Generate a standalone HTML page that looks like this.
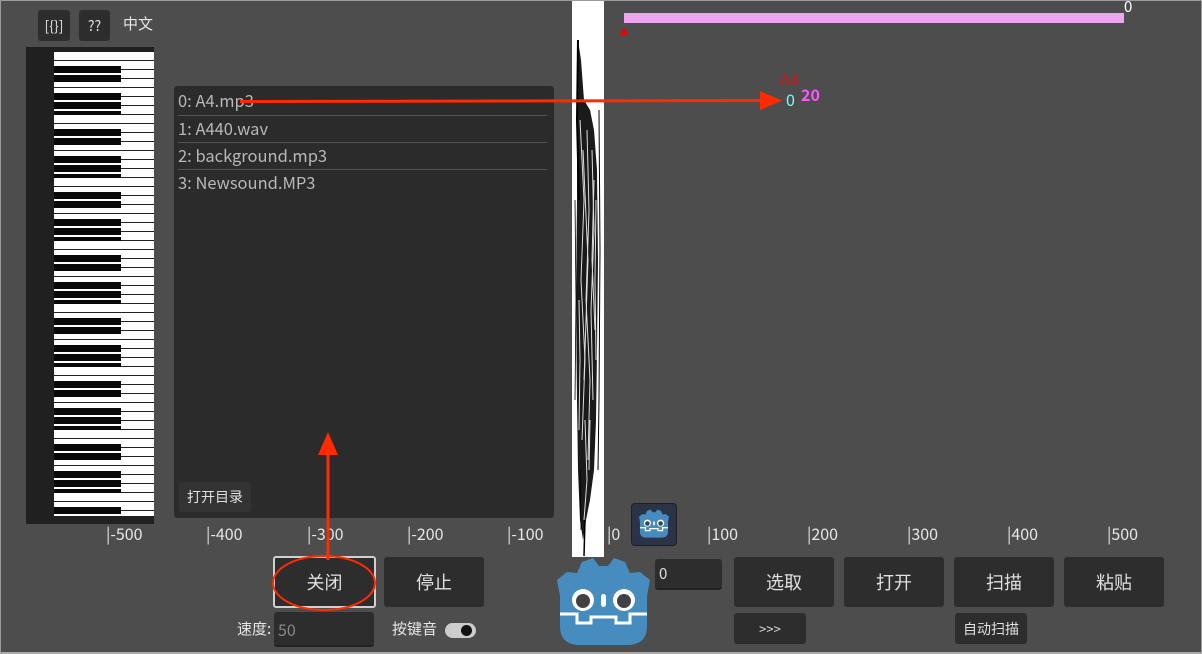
<!DOCTYPE html>
<html><head><meta charset="utf-8"><style>
*{margin:0;padding:0;box-sizing:border-box}
body{width:1202px;height:654px;background:#4d4d4d;position:relative;overflow:hidden;font-family:"Noto Sans CJK SC","Liberation Sans",sans-serif;color:#e6e6e6}
.frame{position:absolute;left:0;top:0;width:1202px;height:654px;border:1px solid #9a9a9a;border-bottom:2px solid #aaa;pointer-events:none}
.a{position:absolute;line-height:1.2}
.btn{position:absolute;background:#2d2d2d;border-radius:3px;display:flex;align-items:center;justify-content:center;color:#e0e0e0}
.tick{position:absolute;top:524px;font-size:16px;color:#e6e6e6;line-height:1.2}
.item{position:absolute;left:178px;font-size:16.5px;color:#b8b8b8;line-height:1.2}
.sep{position:absolute;left:178px;width:369px;height:1px;background:#555}
</style></head><body>
<div class="btn" style="left:38px;top:10px;width:32px;height:31px;font-size:14px">[{}]</div>
<div class="btn" style="left:79px;top:10px;width:31px;height:31px;font-size:14px">??</div>
<div class="a" style="left:123px;top:15px;font-size:15px">中文</div>

<div class="a" style="left:26px;top:47px;width:128px;height:477px;background:#202020"></div>
<div class="a" style="left:54px;top:52px;width:100px;height:464px;background-color:#fff;background-image:linear-gradient(to bottom,transparent 8px,#222 8px,#222 9px);background-size:100% 9px"></div>
<div class="a" style="left:54px;top:52px;width:67px;height:464px;background-image:linear-gradient(to bottom,transparent 14px,#080808 14px,#080808 21px,transparent 21px,transparent 23px,#080808 23px,#080808 30px,transparent 30px,transparent 41px,#080808 41px,#080808 48px,transparent 48px,transparent 50px,#080808 50px,#080808 57px,transparent 57px,transparent 59px,#080808 59px,#080808 66px,transparent 66px);background-size:100% 63px;background-repeat:repeat-y"></div>

<div class="a" style="left:174px;top:86px;width:380px;height:432px;background:#2b2b2b;border-radius:3px"></div>
<div class="item" style="top:91px">0: A4.mp3</div>
<div class="sep" style="top:115px"></div>
<div class="item" style="top:119px">1: A440.wav</div>
<div class="sep" style="top:142px"></div>
<div class="item" style="top:146px">2: background.mp3</div>
<div class="sep" style="top:169px"></div>
<div class="item" style="top:173px">3: Newsound.MP3</div>
<div class="btn" style="left:179px;top:482px;width:72px;height:30px;background:#333;font-size:14px">打开目录</div>

<svg class="a" style="left:572px;top:0" width="32" height="557" viewBox="0 0 32 557">
<rect width="32" height="557" fill="#fff"/>
<path d="M6,40 L9,60 L12,100 L18,110 L22,130 L25,170 L26,260 L25,350 L24,420 L22,470 L18,500 L14,520 L11,540 L8,520 L6,470 L5,400 L4,300 L5,200 L5,120 Z" fill="#1a1a1a"/>
<g stroke="#fff" fill="none" stroke-width="1" opacity="0.85">
<path d="M8,120 L12,200 L9,280 L13,360 L10,440"/>
<path d="M15,130 L17,210 L14,300 L18,380 L16,460"/>
<path d="M20,150 L22,230 L19,310 L21,400"/>
<path d="M7,300 L8,360 L7,430"/>
<path d="M24,200 L23,280 L24,360"/>
<path d="M13,420 L15,480 L12,520"/>
<path d="M18,420 L17,470"/>
<path d="M11,150 L16,260 L12,380"/>
<path d="M22,180 L20,260 L23,330"/>
</g>
<g stroke="#000" fill="none">
<path d="M6,40 L5,120 L7,200" stroke-width="2"/>
<path d="M27,110 L28,250 L27,400 L26,470" stroke-width="1"/>
<path d="M3,200 L4,300 L3,400" stroke-width="0.8"/>
<path d="M13,520 L12,556" stroke-width="1.5"/>
<path d="M8,470 L9,530" stroke-width="0.8"/>
</g></svg>

<div class="a" style="left:624px;top:13px;width:500px;height:10px;background:#eea6ee"></div>
<div class="a" style="left:1124px;top:-2px;font-size:15px;color:#fff">0</div>
<svg class="a" style="left:620px;top:27px" width="8" height="8"><path d="M4,0 L8,8 L0,8Z" fill="#e00"/></svg>
<div class="a" style="left:780px;top:70px;font-size:16px;color:#e01010">A4</div>
<div class="a" style="left:786px;top:90px;font-size:16px;color:#7ff">0</div>
<div class="a" style="left:801px;top:85px;font-size:16px;color:#f5f;font-weight:bold">20</div>

<div class="tick" style="left:106px">|-500</div>
<div class="tick" style="left:206px">|-400</div>
<div class="tick" style="left:307px">|-300</div>
<div class="tick" style="left:407px">|-200</div>
<div class="tick" style="left:507px">|-100</div>
<div class="tick" style="left:607px">|0</div>
<div class="tick" style="left:707px">|100</div>
<div class="tick" style="left:807px">|200</div>
<div class="tick" style="left:907px">|300</div>
<div class="tick" style="left:1007px">|400</div>
<div class="tick" style="left:1107px">|500</div>

<div class="btn" style="left:273px;top:556px;width:103px;height:52px;border:2px solid #d0d0d0;font-size:18px">关闭</div>
<div class="btn" style="left:384px;top:557px;width:100px;height:50px;font-size:18px">停止</div>
<div class="a" style="left:237px;top:620px;font-size:15px">速度:</div>
<div class="btn" style="left:274px;top:612px;width:100px;height:35px;justify-content:flex-start;padding-left:4px;font-size:16px;color:#888;border-bottom:2px solid #222">50</div>
<div class="a" style="left:392px;top:620px;font-size:15px">按键音</div>
<div class="a" style="left:445px;top:623px;width:31px;height:15px;border-radius:8px;background:#ccc"></div>
<div class="a" style="left:461px;top:625px;width:11px;height:11px;border-radius:6px;background:#111"></div>

<div class="btn" style="left:655px;top:559px;width:67px;height:31px;justify-content:flex-start;padding-left:4px;font-size:15px;border-bottom:2px solid #222">0</div>
<div class="btn" style="left:734px;top:557px;width:100px;height:50px;font-size:18px">选取</div>
<div class="btn" style="left:844px;top:557px;width:100px;height:50px;font-size:18px">打开</div>
<div class="btn" style="left:954px;top:557px;width:100px;height:50px;font-size:18px">扫描</div>
<div class="btn" style="left:1064px;top:557px;width:100px;height:50px;font-size:18px">粘贴</div>
<div class="btn" style="left:734px;top:613px;width:72px;height:31px;font-size:13px">&gt;&gt;&gt;</div>
<div class="btn" style="left:955px;top:613px;width:72px;height:31px;font-size:14px">自动扫描</div>

<div class="a" style="left:631px;top:503px;width:46px;height:43px;background:#2c3347;border:1px solid #1a1f2b;border-radius:4px"></div>
<svg class="a" style="left:639px;top:509px" width="30" height="29" viewBox="0 0 93 90">
<path d="M3,40 L0,24 L10,16 L20,17 L25,6 L36,2 L42,10 H51 L57,2 L68,6 L73,17 L83,16 L93,24 L90,40 V70 Q90,89 70,89 H23 Q3,89 3,70 Z" fill="#478cbf"/>
<circle cx="26" cy="44" r="11" fill="#fff"/><circle cx="26" cy="45" r="7" fill="#414042"/>
<circle cx="67" cy="44" r="11" fill="#fff"/><circle cx="67" cy="45" r="7" fill="#414042"/>
<rect x="44" y="38" width="5" height="13" rx="2.5" fill="#fff"/>
<path d="M3,58 H20 V67 H34 V61 H59 V67 H73 V58 H90" stroke="#fff" stroke-width="4" fill="none"/>
</svg>
<svg class="a" style="left:557px;top:556px" width="93" height="90" viewBox="0 0 93 90">
<path d="M3,40 L0,24 L10,16 L20,17 L25,6 L36,2 L42,10 H51 L57,2 L68,6 L73,17 L83,16 L93,24 L90,40 V70 Q90,89 70,89 H23 Q3,89 3,70 Z" fill="#478cbf"/>
<circle cx="26" cy="44" r="11" fill="#fff"/><circle cx="26" cy="45" r="7" fill="#414042"/>
<circle cx="67" cy="44" r="11" fill="#fff"/><circle cx="67" cy="45" r="7" fill="#414042"/>
<rect x="44" y="38" width="5" height="13" rx="2.5" fill="#fff"/>
<path d="M3,58 H20 V67 H34 V61 H59 V67 H73 V58 H90" stroke="#fff" stroke-width="3" fill="none"/>
</svg>

<svg class="a" style="left:0;top:0" width="1202" height="654">
<line x1="240" y1="101.5" x2="765" y2="100.5" stroke="#ff2a00" stroke-width="3"/>
<path d="M760,91 L782,100.5 L760,110 Z" fill="#ff2a00"/>
<line x1="328" y1="560" x2="328" y2="450" stroke="#ff2a00" stroke-width="3"/>
<path d="M318,455 L328,432 L338,455 Z" fill="#ff2a00"/>
<ellipse cx="324" cy="583" rx="51" ry="27" fill="none" stroke="#ff2a00" stroke-width="2"/>
</svg>
<div class="frame"></div>
</body></html>
